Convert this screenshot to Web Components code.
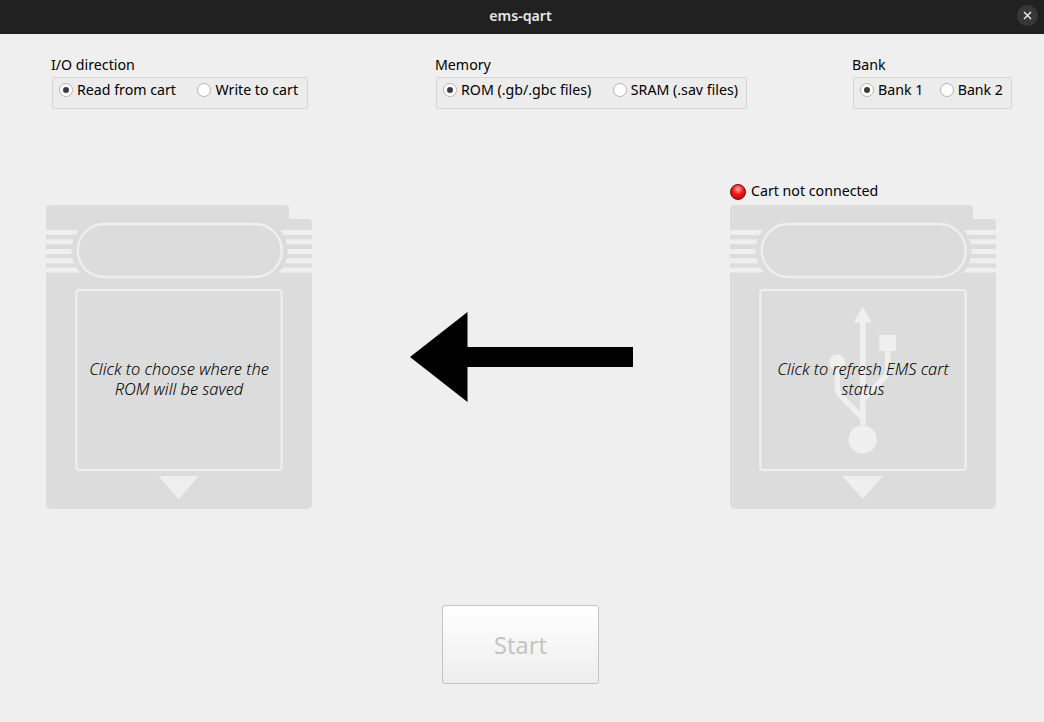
<!DOCTYPE html>
<html>
<head>
<meta charset="utf-8">
<title>ems-qart</title>
<style>
  html, body { margin: 0; height: 100%; background: #efefef; }
  body { font-family: "Noto Sans", sans-serif; font-size: 14.2px; color: #000; }
</style>
</head>
<body>
<app-window>
  <title-bar slot="title">ems-qart</title-bar>

  <radio-group slot="options" label="I/O direction" style="width:257px;--end:9px">
    <radio-option checked>Read from cart</radio-option>
    <radio-option>Write to cart</radio-option>
  </radio-group>
  <radio-group slot="options" label="Memory" style="width:312px;margin-left:127px;--end:8px">
    <radio-option checked>ROM (.gb/.gbc files)</radio-option>
    <radio-option>SRAM (.sav files)</radio-option>
  </radio-group>
  <radio-group slot="options" label="Bank" style="width:160px;margin-left:105px;--end:8px">
    <radio-option checked>Bank 1</radio-option>
    <radio-option>Bank 2</radio-option>
  </radio-group>

  <ems-cart slot="left">Click to choose where the ROM will be saved</ems-cart>
  <direction-arrow slot="middle"></direction-arrow>
  <ems-cart slot="right" usb status="Cart not connected">Click to refresh EMS cart status</ems-cart>

  <start-button slot="action">Start</start-button>
</app-window>

<script>
class AppWindow extends HTMLElement {
  constructor() {
    super();
    this.attachShadow({ mode: "open" });
    this.shadowRoot.innerHTML = /* html */`
    <style>
      :host { display: block; width: 1044px; height: 722px; overflow: hidden; }
      .options { display: flex; align-items: flex-start; padding: 21px 0 0 51px; }
      .carts { display: flex; justify-content: space-between; align-items: flex-start; padding: 72px 48px 0 46px; }
      .action { display: flex; justify-content: center; padding: 96px 3px 0 0; }
    </style>
    <slot name="title"></slot>
    <div class="options"><slot name="options"></slot></div>
    <div class="carts">
      <slot name="left"></slot>
      <slot name="middle"></slot>
      <slot name="right"></slot>
    </div>
    <div class="action"><slot name="action"></slot></div>`;
  }
}

class TitleBar extends HTMLElement {
  constructor() {
    super();
    this.attachShadow({ mode: "open" });
    this.shadowRoot.innerHTML = /* html */`
    <style>
      :host {
        display: grid;
        grid-template-columns: 1fr auto 1fr;
        align-items: center;
        height: 34px;
        background: #212121;
        color: #e6e6e6;
        font-size: 14.2px;
        font-weight: 600;
      }
      .title { grid-column: 2; padding: 0 3px 4px 0; }
      .close {
        grid-column: 3;
        justify-self: end;
        width: 21px;
        height: 21px;
        margin: 0 6px 4px 0;
        border-radius: 50%;
        background: #373737;
        display: flex;
        align-items: center;
        justify-content: center;
      }
    </style>
    <div class="title"><slot></slot></div>
    <div class="close">
      <svg width="9" height="9" viewBox="0 0 9 9"><path d="M1 1 8 8M8 1 1 8" stroke="#f0f0f0" stroke-width="1.4" fill="none"/></svg>
    </div>`;
  }
}

class RadioGroup extends HTMLElement {
  constructor() {
    super();
    this.attachShadow({ mode: "open" });
    this.shadowRoot.innerHTML = /* html */`
    <style>
      :host { display: block; flex: none; box-sizing: border-box; }
      .label { line-height: 20px; height: 22px; }
      .box {
        box-sizing: border-box;
        margin-left: 1px;
        height: 32px;
        padding: 2px var(--end, 8px) 0 6px;
        display: flex;
        align-items: flex-start;
        justify-content: space-between;
        background: #ececec;
        border: 1px solid #d6d6d6;
        border-radius: 2px;
      }
    </style>
    <div class="label"></div>
    <div class="box"><slot></slot></div>`;
  }
  connectedCallback() {
    this.shadowRoot.querySelector(".label").textContent = this.getAttribute("label");
  }
}

class RadioOption extends HTMLElement {
  constructor() {
    super();
    this.attachShadow({ mode: "open" });
    this.shadowRoot.innerHTML = /* html */`
    <style>
      :host { display: flex; align-items: center; gap: 4px; height: 20px; line-height: 20px; white-space: nowrap; }
      .mark {
        box-sizing: border-box;
        width: 14px;
        height: 14px;
        border: 1px solid #b4b4b4;
        border-radius: 50%;
        background: #fff;
        display: flex;
        align-items: center;
        justify-content: center;
      }
      :host([checked]) .mark::after {
        content: "";
        width: 6px;
        height: 6px;
        border-radius: 50%;
        background: #3c3c3c;
      }
    </style>
    <span class="mark"></span><slot></slot>`;
  }
}

const CART_STRIPES = [25, 34.3, 44, 53.3, 62.6];

class EmsCart extends HTMLElement {
  constructor() {
    super();
    this.attachShadow({ mode: "open" });
  }

  connectedCallback() {
    const status = this.getAttribute("status");
    const usb = this.hasAttribute("usb") ? /* html */`
      <g fill="#efefef">
        <path d="M132.7 101.5 142 117.5H135.5V220H130V117.5H123.5Z"/>
        <circle cx="132.7" cy="234.5" r="14"/>
        <rect x="149.3" y="130" width="16.7" height="16"/>
        <circle cx="107.3" cy="157.5" r="8"/>
      </g>
      <path d="M157.7 146V165Q157.7 169 155 172L132.7 195M107.3 160V183Q107.3 187 110 190L132.7 213" fill="none" stroke="#efefef" stroke-width="5.5"/>` : "";
    this.shadowRoot.innerHTML = /* html */`
    <style>
      :host { display: block; flex: none; width: 266px; }
      .status {
        height: 24px;
        display: flex;
        align-items: flex-start;
        gap: 5px;
        line-height: 20px;
      }
      .led {
        box-sizing: border-box;
        width: 16px;
        height: 16px;
        margin-top: 3px;
        border-radius: 50%;
        border: 1px solid #5a1010;
        background: radial-gradient(circle at 50% 30%, #ffa8a8 0, #f41414 45%, #c80000 100%);
      }
      .cart { display: grid; width: 266px; height: 304px; }
      .cart > * { grid-area: 1 / 1; }
      svg { display: block; }
      .text {
        box-sizing: border-box;
        width: 204px;
        height: 180px;
        margin: 84px 0 0 31px;
        padding: 0 6px;
        display: flex;
        align-items: center;
        justify-content: center;
        text-align: center;
        font-size: 16.4px;
        font-style: italic;
        font-weight: 350;
        line-height: 20px;
      }
    </style>
    <div class="status">${status ? `<span class="led"></span><span>${status}</span>` : ""}</div>
    <div class="cart">
      <svg width="266" height="304" viewBox="0 0 266 304">
        <path d="M4 0H239a4 4 0 0 1 4 4V14H262a4 4 0 0 1 4 4V299a5 5 0 0 1-5 5H5a5 5 0 0 1-5-5V4a4 4 0 0 1 4-4Z" fill="#dcdcdc"/>
        <g fill="#efefef">
          ${CART_STRIPES.map(y => `<rect x="0" y="${y}" width="266" height="5"/>`).join("")}
        </g>
        <rect x="25.5" y="12.5" width="216" height="66" rx="33" fill="#dcdcdc"/>
        <rect x="31.7" y="19" width="204" height="53" rx="26.5" fill="#dcdcdc" stroke="#efefef" stroke-width="2.4"/>
        <rect x="30.3" y="85" width="205.4" height="180" rx="3" fill="none" stroke="#efefef" stroke-width="2.2"/>
        ${usb}
        <path d="M112.3 271H153L132.7 294Z" fill="#efefef"/>
      </svg>
      <div class="text"><span><slot></slot></span></div>
    </div>`;
  }
}

class DirectionArrow extends HTMLElement {
  constructor() {
    super();
    this.attachShadow({ mode: "open" });
    this.shadowRoot.innerHTML = /* html */`
    <style>
      :host { display: block; flex: none; width: 223px; height: 90px; margin-top: 131px; }
      svg { display: block; }
    </style>
    <svg width="223" height="90" viewBox="0 0 223 90">
      <path d="M0 45 57.5 0V35H223V55H57.5V90Z" fill="#000"/>
    </svg>`;
  }
}

class StartButton extends HTMLElement {
  constructor() {
    super();
    this.attachShadow({ mode: "open" });
    this.shadowRoot.innerHTML = /* html */`
    <style>
      :host {
        box-sizing: border-box;
        display: flex;
        align-items: center;
        justify-content: center;
        width: 157px;
        height: 79px;
        border: 1px solid #c4c4c4;
        border-radius: 3px;
        background: linear-gradient(#ffffff, #ededed);
        color: #c4c4c4;
        font-size: 23.6px;
      }
    </style>
    <slot></slot>`;
  }
}

customElements.define("app-window", AppWindow);
customElements.define("title-bar", TitleBar);
customElements.define("radio-group", RadioGroup);
customElements.define("radio-option", RadioOption);
customElements.define("ems-cart", EmsCart);
customElements.define("direction-arrow", DirectionArrow);
customElements.define("start-button", StartButton);
</script>
</body>
</html>
